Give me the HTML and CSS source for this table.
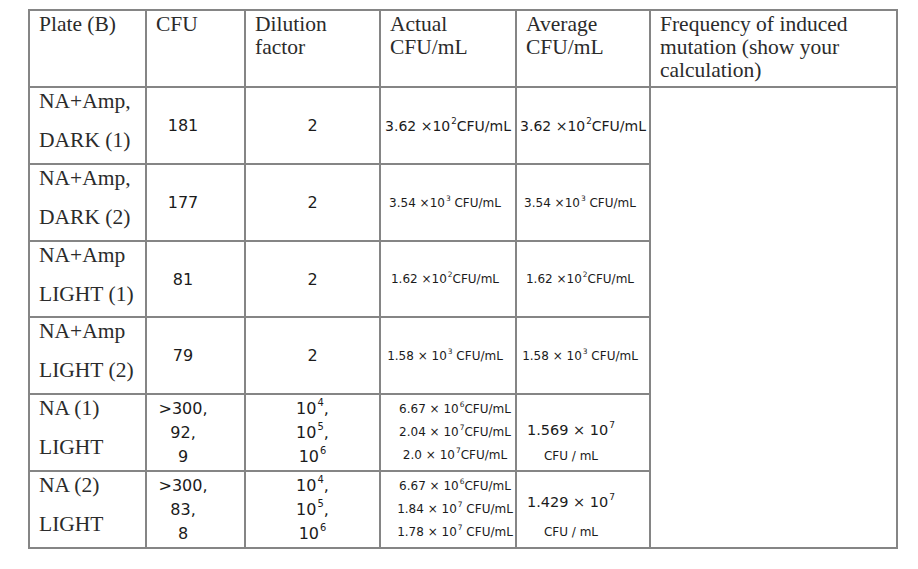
FILE: index.html
```html
<!DOCTYPE html>
<html lang="en">
<head>
<meta charset="utf-8">
<title>Plate (B) results</title>
<link rel="stylesheet" href="styles.css">
</head>
<body>
<div class="sheet">
  <div class="cell head">Plate (B)</div>
  <div class="cell head">CFU</div>
  <div class="cell head">Dilution<br>factor</div>
  <div class="cell head">Actual<br>CFU/mL</div>
  <div class="cell head">Average<br>CFU/mL</div>
  <div class="cell head">Frequency of induced<br>mutation (show your<br>calculation)</div>

  <div class="cell label"><span>NA+Amp,</span><span>DARK (1)</span></div>
  <div class="cell hand cfu"><span>181</span></div>
  <div class="cell hand"><span>2</span></div>
  <div class="cell hand val big"><span>3.62 ×10<sup>2</sup>CFU/mL</span></div>
  <div class="cell hand val big"><span>3.62 ×10<sup>2</sup>CFU/mL</span></div>
  <div class="cell freq"></div>

  <div class="cell label"><span>NA+Amp,</span><span>DARK (2)</span></div>
  <div class="cell hand cfu"><span>177</span></div>
  <div class="cell hand"><span>2</span></div>
  <div class="cell hand val"><span>3.54 ×10<sup>3</sup> CFU/mL</span></div>
  <div class="cell hand val"><span>3.54 ×10<sup>3</sup> CFU/mL</span></div>

  <div class="cell label"><span>NA+Amp</span><span>LIGHT (1)</span></div>
  <div class="cell hand cfu"><span>81</span></div>
  <div class="cell hand"><span>2</span></div>
  <div class="cell hand val"><span>1.62 ×10<sup>2</sup>CFU/mL</span></div>
  <div class="cell hand val"><span>1.62 ×10<sup>2</sup>CFU/mL</span></div>

  <div class="cell label"><span>NA+Amp</span><span>LIGHT (2)</span></div>
  <div class="cell hand cfu"><span>79</span></div>
  <div class="cell hand"><span>2</span></div>
  <div class="cell hand val"><span>1.58 × 10<sup>3</sup> CFU/mL</span></div>
  <div class="cell hand val"><span>1.58 × 10<sup>3</sup> CFU/mL</span></div>

  <div class="cell label"><span>NA (1)</span><span>LIGHT</span></div>
  <div class="cell hand cfu multi"><span>&gt;300,</span><span>92,</span><span>9</span></div>
  <div class="cell hand multi"><span>10<sup>4</sup>,</span><span>10<sup>5</sup>,</span><span>10<sup>6</sup></span></div>
  <div class="cell hand multi tiny"><span>6.67 × 10<sup>6</sup>CFU/mL</span><span>2.04 × 10<sup>7</sup>CFU/mL</span><span>2.0 × 10<sup>7</sup>CFU/mL</span></div>
  <div class="cell hand multi avg"><span>1.569 × 10<sup>7</sup></span><span class="unit">CFU / mL</span></div>

  <div class="cell label"><span>NA (2)</span><span>LIGHT</span></div>
  <div class="cell hand cfu multi"><span>&gt;300,</span><span>83,</span><span>8</span></div>
  <div class="cell hand multi"><span>10<sup>4</sup>,</span><span>10<sup>5</sup>,</span><span>10<sup>6</sup></span></div>
  <div class="cell hand multi tiny"><span>6.67 × 10<sup>6</sup>CFU/mL</span><span>1.84 × 10<sup>7</sup> CFU/mL</span><span>1.78 × 10<sup>7</sup> CFU/mL</span></div>
  <div class="cell hand multi avg two"><span>1.429 × 10<sup>7</sup></span><span class="unit">CFU / mL</span></div>
</div>
</body>
</html>
```

FILE: styles.css
```css
html, body {
  margin: 0;
  padding: 0;
  background: #ffffff;
}

.sheet {
  margin: 9px 0 0 28px;
  width: fit-content;
  display: grid;
  grid-template-columns: 115px 97px 133px 134px 132px 245px;
  grid-template-rows: 75px 75px 75px 74px 75px 75px 75px;
  gap: 2px;
  padding: 2px;
  background: #858585;
}

.cell {
  background: #ffffff;
  box-sizing: border-box;
  overflow: visible;
}

.head {
  font-family: "Liberation Serif", "Times New Roman", serif;
  font-size: 21.5px;
  line-height: 23px;
  color: #2b2b2b;
  padding: 2px 0 0 9px;
}

.label {
  font-family: "Liberation Serif", "Times New Roman", serif;
  font-size: 21.5px;
  line-height: 22.5px;
  color: #2b2b2b;
  padding: 2px 0 0 9px;
  display: flex;
  flex-direction: column;
  gap: 16px;
  white-space: nowrap;
}

.freq {
  grid-column: 6;
  grid-row: 2 / span 6;
}

.hand {
  font-family: "DejaVu Sans", sans-serif;
  font-size: 16px;
  color: #1b1b1b;
  display: flex;
  flex-direction: column;
  align-items: center;
  justify-content: center;
  white-space: nowrap;
  text-align: center;
}

.hand sup {
  font-size: 0.62em;
  vertical-align: 0.75em;
  line-height: 0;
  margin-left: 1px;
}

.cfu {
  padding-right: 25px;
}

.val {
  font-size: 12px;
  padding-right: 6px;
}

.val.big {
  font-size: 14px;
  padding-right: 0;
}

.multi {
  line-height: 24px;
}

.tiny {
  font-size: 12px;
  line-height: 23px;
  padding-left: 14px;
}

.avg {
  font-size: 14.5px;
  line-height: 26px;
  padding-top: 20px;
  padding-right: 24px;
}

.avg .unit {
  font-size: 12px;
}

.avg.two {
  line-height: 30px;
  padding-top: 14px;
}
```
